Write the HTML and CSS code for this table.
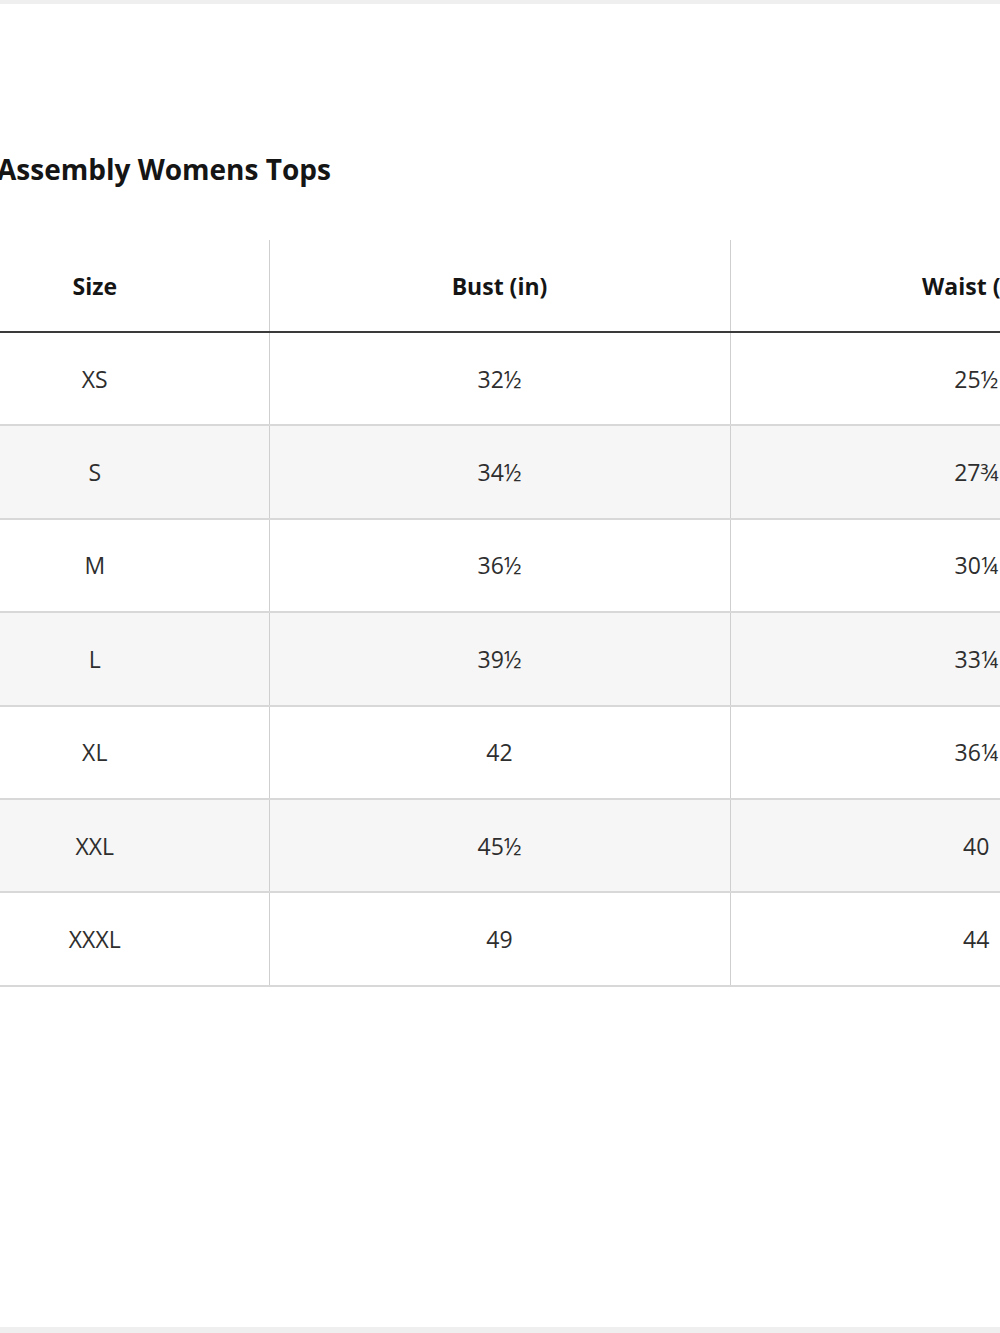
FILE: index.html
```html
<!DOCTYPE html>
<html>
<head>
<meta charset="utf-8">
<link rel="stylesheet" href="styles.css">
</head>
<body>
<div class="band"></div>
<main class="page">
  <h1 class="title">Assembly Womens Tops</h1>
  <table class="chart">
    <colgroup>
      <col class="c1"><col class="c2"><col class="c3">
    </colgroup>
    <thead>
      <tr><th>Size</th><th>Bust (in)</th><th>Waist (in)</th></tr>
    </thead>
    <tbody>
      <tr><td>XS</td><td>32½</td><td>25½</td></tr>
      <tr><td>S</td><td>34½</td><td>27¾</td></tr>
      <tr><td>M</td><td>36½</td><td>30¼</td></tr>
      <tr><td>L</td><td>39½</td><td>33¼</td></tr>
      <tr><td>XL</td><td>42</td><td>36¼</td></tr>
      <tr><td>XXL</td><td>45½</td><td>40</td></tr>
      <tr><td>XXXL</td><td>49</td><td>44</td></tr>
    </tbody>
  </table>
</main>
<div class="band bottom"></div>
</body>
</html>
```
FILE: styles.css
```css
html, body {
  margin: 0;
  padding: 0;
  background: #ffffff;
  overflow: hidden;
}
body {
  width: 1000px;
  height: 1333px;
  display: flex;
  flex-direction: column;
  font-family: "Open Sans", "Noto Sans", sans-serif;
  color: #2b2b2b;
}
.band {
  height: 4px;
  background: #efefef;
  flex: none;
}
.band.bottom {
  height: 6px;
}
.page {
  flex: 1;
  overflow: hidden;
}
.title {
  margin: 145px 0 0 -3px;
  font-size: 28px;
  line-height: 40px;
  font-weight: 700;
  color: #151515;
  letter-spacing: 0;
}
.chart {
  margin: 51px 0 0 -79px;
  border-collapse: collapse;
  table-layout: fixed;
  width: 1301px;
}
.c1 { width: 348px; }
.c2 { width: 461px; }
.c3 { width: 492px; }
.chart th,
.chart td {
  padding: 0;
  text-align: center;
  font-size: 23px;
  border-left: 1px solid #cfcfcf;
}
.chart th:first-child,
.chart td:first-child {
  border-left: none;
}
.chart th {
  height: 91px;
  font-weight: 700;
  color: #151515;
  border-bottom: 2px solid #3a3a3a;
}
.chart td {
  height: 91.4px;
  font-weight: 400;
  color: #2e2e2e;
  border-bottom: 2px solid #d8d8d8;
}
.chart tbody tr:nth-child(even) td {
  background: #f6f6f6;
}
```
